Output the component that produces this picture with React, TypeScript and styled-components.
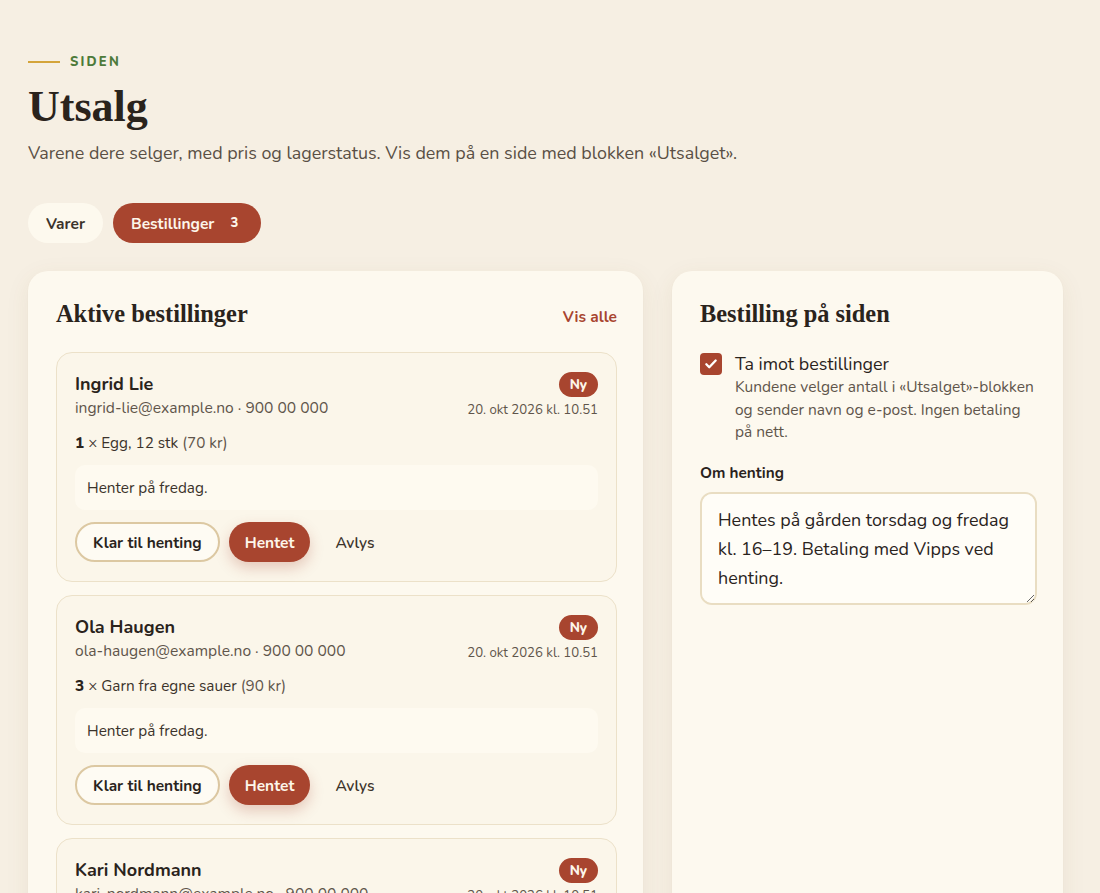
import styled, { createGlobalStyle } from 'styled-components';

const GlobalStyle = createGlobalStyle`
  body {
    margin: 0;
    background: #f6efe3;
    font-family: 'Nunito', 'Lato', 'Noto Sans', sans-serif;
    color: #2a231c;
  }
  * { box-sizing: border-box; }
`;

const Page = styled.div`
  padding: 54px 28px 40px 28px;
  max-width: 1064px;
`;

const Eyebrow = styled.div`
  display: flex;
  align-items: center;
  gap: 10px;
  font-size: 13px;
  font-weight: 800;
  letter-spacing: 2.2px;
  color: #4d7a3a;
  line-height: 16px;

  &::before {
    content: '';
    width: 32px;
    height: 2px;
    background: #d4a43a;
  }
`;

const Title = styled.h1`
  font-family: 'Liberation Serif', 'DejaVu Serif', serif;
  font-weight: 700;
  font-size: 44px;
  line-height: 54px;
  margin: 10px 0 6px;
  color: #2a231c;
`;

const Lead = styled.p`
  font-size: 17.9px;
  line-height: 26px;
  margin: 0;
  color: #5a4f45;
`;

const Tabs = styled.div`
  display: flex;
  gap: 10px;
  margin: 37px 0 28px;
`;

const Tab = styled.button<{ $active?: boolean }>`
  height: 40px;
  padding: 0 18px;
  border: none;
  border-radius: 20px;
  font-family: inherit;
  font-size: 15.5px;
  font-weight: 700;
  display: flex;
  align-items: center;
  gap: 11px;
  background: ${(p) => (p.$active ? '#a8452f' : '#fdf9ee')};
  color: ${(p) => (p.$active ? '#fdf6ea' : '#3b332b')};
`;

const Count = styled.span`
  font-size: 13px;
  font-weight: 800;
  padding: 0 5px;
`;

const Layout = styled.div`
  display: grid;
  grid-template-columns: 615px 391px;
  gap: 29px;
  align-items: start;
`;

const Card = styled.section<{ $tall?: boolean }>`
  background: #fdf9ef;
  border-radius: 20px;
  padding: 28px 26px 28px 28px;
  box-shadow: 0 6px 24px rgba(120, 90, 40, 0.08), 0 1px 2px rgba(120, 90, 40, 0.05);
  min-height: ${(p) => (p.$tall ? '700px' : 'auto')};
`;

const CardHead = styled.div`
  display: flex;
  align-items: baseline;
  justify-content: space-between;
  margin-bottom: 23px;
`;

const CardTitle = styled.h2`
  font-family: 'Liberation Serif', 'DejaVu Serif', serif;
  font-weight: 700;
  font-size: 24.4px;
  line-height: 30px;
  margin: 0;
  color: #2a231c;
`;

const LinkText = styled.a`
  font-size: 15.5px;
  font-weight: 700;
  color: #a8452f;
  text-decoration: none;
`;

const OrderList = styled.div`
  display: flex;
  flex-direction: column;
  gap: 13px;
`;

const Order = styled.article`
  background: #fbf6ea;
  border: 1px solid #ece1c9;
  border-radius: 16px;
  padding: 18px 18px 19px 18px;
`;

const OrderTop = styled.div`
  display: flex;
  justify-content: space-between;
  align-items: flex-start;
`;

const Name = styled.div`
  font-size: 18px;
  font-weight: 700;
  line-height: 26px;
`;

const Contact = styled.div`
  font-size: 15.6px;
  line-height: 22px;
  color: #5f554b;
`;

const Meta = styled.div`
  display: flex;
  flex-direction: column;
  align-items: flex-end;
  gap: 4px;
  margin-top: 1px;
`;

const Badge = styled.span`
  background: #a8452f;
  color: #fdf6ea;
  font-size: 13.5px;
  font-weight: 800;
  line-height: 25px;
  height: 25px;
  padding: 0 11px;
  border-radius: 13px;
`;

const Stamp = styled.div`
  font-size: 13.2px;
  line-height: 18px;
  color: #5f554b;
`;

const Line = styled.div`
  font-size: 15.3px;
  line-height: 22px;
  margin-top: 13px;
  color: #3b332b;

  b { font-weight: 800; color: #2a231c; }
  span { color: #5f554b; }
`;

const Note = styled.div`
  margin-top: 11px;
  background: #fefaf0;
  border-radius: 10px;
  padding: 12px 12px 11px;
  font-size: 15.3px;
  line-height: 22px;
  color: #3b332b;
`;

const Actions = styled.div`
  display: flex;
  align-items: center;
  gap: 9px;
  margin-top: 12px;
`;

const ActionButton = styled.button<{ $variant: 'outline' | 'primary' | 'ghost' }>`
  height: 40px;
  border-radius: 20px;
  padding: 0 16px;
  font-family: inherit;
  font-size: 15.5px;
  font-weight: 700;
  cursor: pointer;
  ${(p) =>
    p.$variant === 'outline'
      ? `
    background: #fefbf3;
    border: 2px solid #dcc8a2;
    color: #2a231c;
  `
      : p.$variant === 'primary'
        ? `
    background: #a8452f;
    border: none;
    color: #fdf6ea;
    box-shadow: 0 6px 14px rgba(168, 69, 47, 0.25);
  `
        : `
    background: transparent;
    border: none;
    color: #3b332b;
    font-weight: 600;
  `}
`;

const CheckRow = styled.label`
  display: grid;
  grid-template-columns: 22px 1fr;
  column-gap: 13px;
  margin-top: 2px;
`;

const Box = styled.span`
  width: 22px;
  height: 22px;
  border-radius: 4px;
  background: #a8452f;
  display: flex;
  align-items: center;
  justify-content: center;
  margin-top: 1px;
`;

const CheckLabel = styled.div`
  font-size: 17.9px;
  line-height: 24px;
  color: #2a231c;
`;

const CheckHint = styled.div`
  font-size: 15.5px;
  line-height: 22.5px;
  color: #5f554b;
`;

const FieldLabel = styled.div`
  font-size: 15.3px;
  font-weight: 700;
  line-height: 22px;
  margin-top: 18px;
  margin-bottom: 8px;
`;

const TextArea = styled.textarea`
  display: block;
  width: 100%;
  height: 113px;
  border: 2px solid #e9ddc2;
  border-radius: 12px;
  background: #fffdf7;
  padding: 12px 16px;
  font-family: inherit;
  font-size: 17.9px;
  line-height: 29px;
  color: #2a231c;
  resize: vertical;
  outline: none;
`;

const orders = [
  {
    name: 'Ingrid Lie',
    email: 'ingrid-lie@example.no',
    qty: 1,
    item: 'Egg, 12 stk',
    price: '70 kr',
    note: 'Henter på fredag.'
  },
  {
    name: 'Ola Haugen',
    email: 'ola-haugen@example.no',
    qty: 3,
    item: 'Garn fra egne sauer',
    price: '90 kr',
    note: 'Henter på fredag.'
  },
  {
    name: 'Kari Nordmann',
    email: 'kari-nordmann@example.no',
    qty: 2,
    item: 'Honning, 500 g',
    price: '120 kr',
    note: 'Henter på torsdag.'
  }
];

export default function App() {
  return (
    <>
      <GlobalStyle />
      <Page>
        <Eyebrow>SIDEN</Eyebrow>
        <Title>Utsalg</Title>
        <Lead>Varene dere selger, med pris og lagerstatus. Vis dem på en side med blokken «Utsalget».</Lead>

        <Tabs>
          <Tab>Varer</Tab>
          <Tab $active>
            Bestillinger <Count>3</Count>
          </Tab>
        </Tabs>

        <Layout>
          <Card>
            <CardHead>
              <CardTitle>Aktive bestillinger</CardTitle>
              <LinkText href="#">Vis alle</LinkText>
            </CardHead>
            <OrderList>
              {orders.map((o) => (
                <Order key={o.email}>
                  <OrderTop>
                    <div>
                      <Name>{o.name}</Name>
                      <Contact>{o.email} · 900 00 000</Contact>
                    </div>
                    <Meta>
                      <Badge>Ny</Badge>
                      <Stamp>20. okt 2026 kl. 10.51</Stamp>
                    </Meta>
                  </OrderTop>
                  <Line>
                    <b>{o.qty}</b> × {o.item} <span>({o.price})</span>
                  </Line>
                  <Note>{o.note}</Note>
                  <Actions>
                    <ActionButton $variant="outline">Klar til henting</ActionButton>
                    <ActionButton $variant="primary">Hentet</ActionButton>
                    <ActionButton $variant="ghost">Avlys</ActionButton>
                  </Actions>
                </Order>
              ))}
            </OrderList>
          </Card>

          <Card $tall>
            <CardHead>
              <CardTitle>Bestilling på siden</CardTitle>
            </CardHead>
            <CheckRow>
              <Box>
                <svg width="14" height="14" viewBox="0 0 24 24" fill="none" stroke="#fff" strokeWidth="4" strokeLinecap="round" strokeLinejoin="round">
                  <path d="M4 12.5l5 5L20 6" />
                </svg>
              </Box>
              <CheckLabel>Ta imot bestillinger</CheckLabel>
              <span />
              <CheckHint>
                Kundene velger antall i «Utsalget»-blokken og sender navn og e-post. Ingen betaling på nett.
              </CheckHint>
            </CheckRow>
            <FieldLabel>Om henting</FieldLabel>
            <TextArea defaultValue="Hentes på gården torsdag og fredag kl. 16–19. Betaling med Vipps ved henting." />
          </Card>
        </Layout>
      </Page>
    </>
  );
}
